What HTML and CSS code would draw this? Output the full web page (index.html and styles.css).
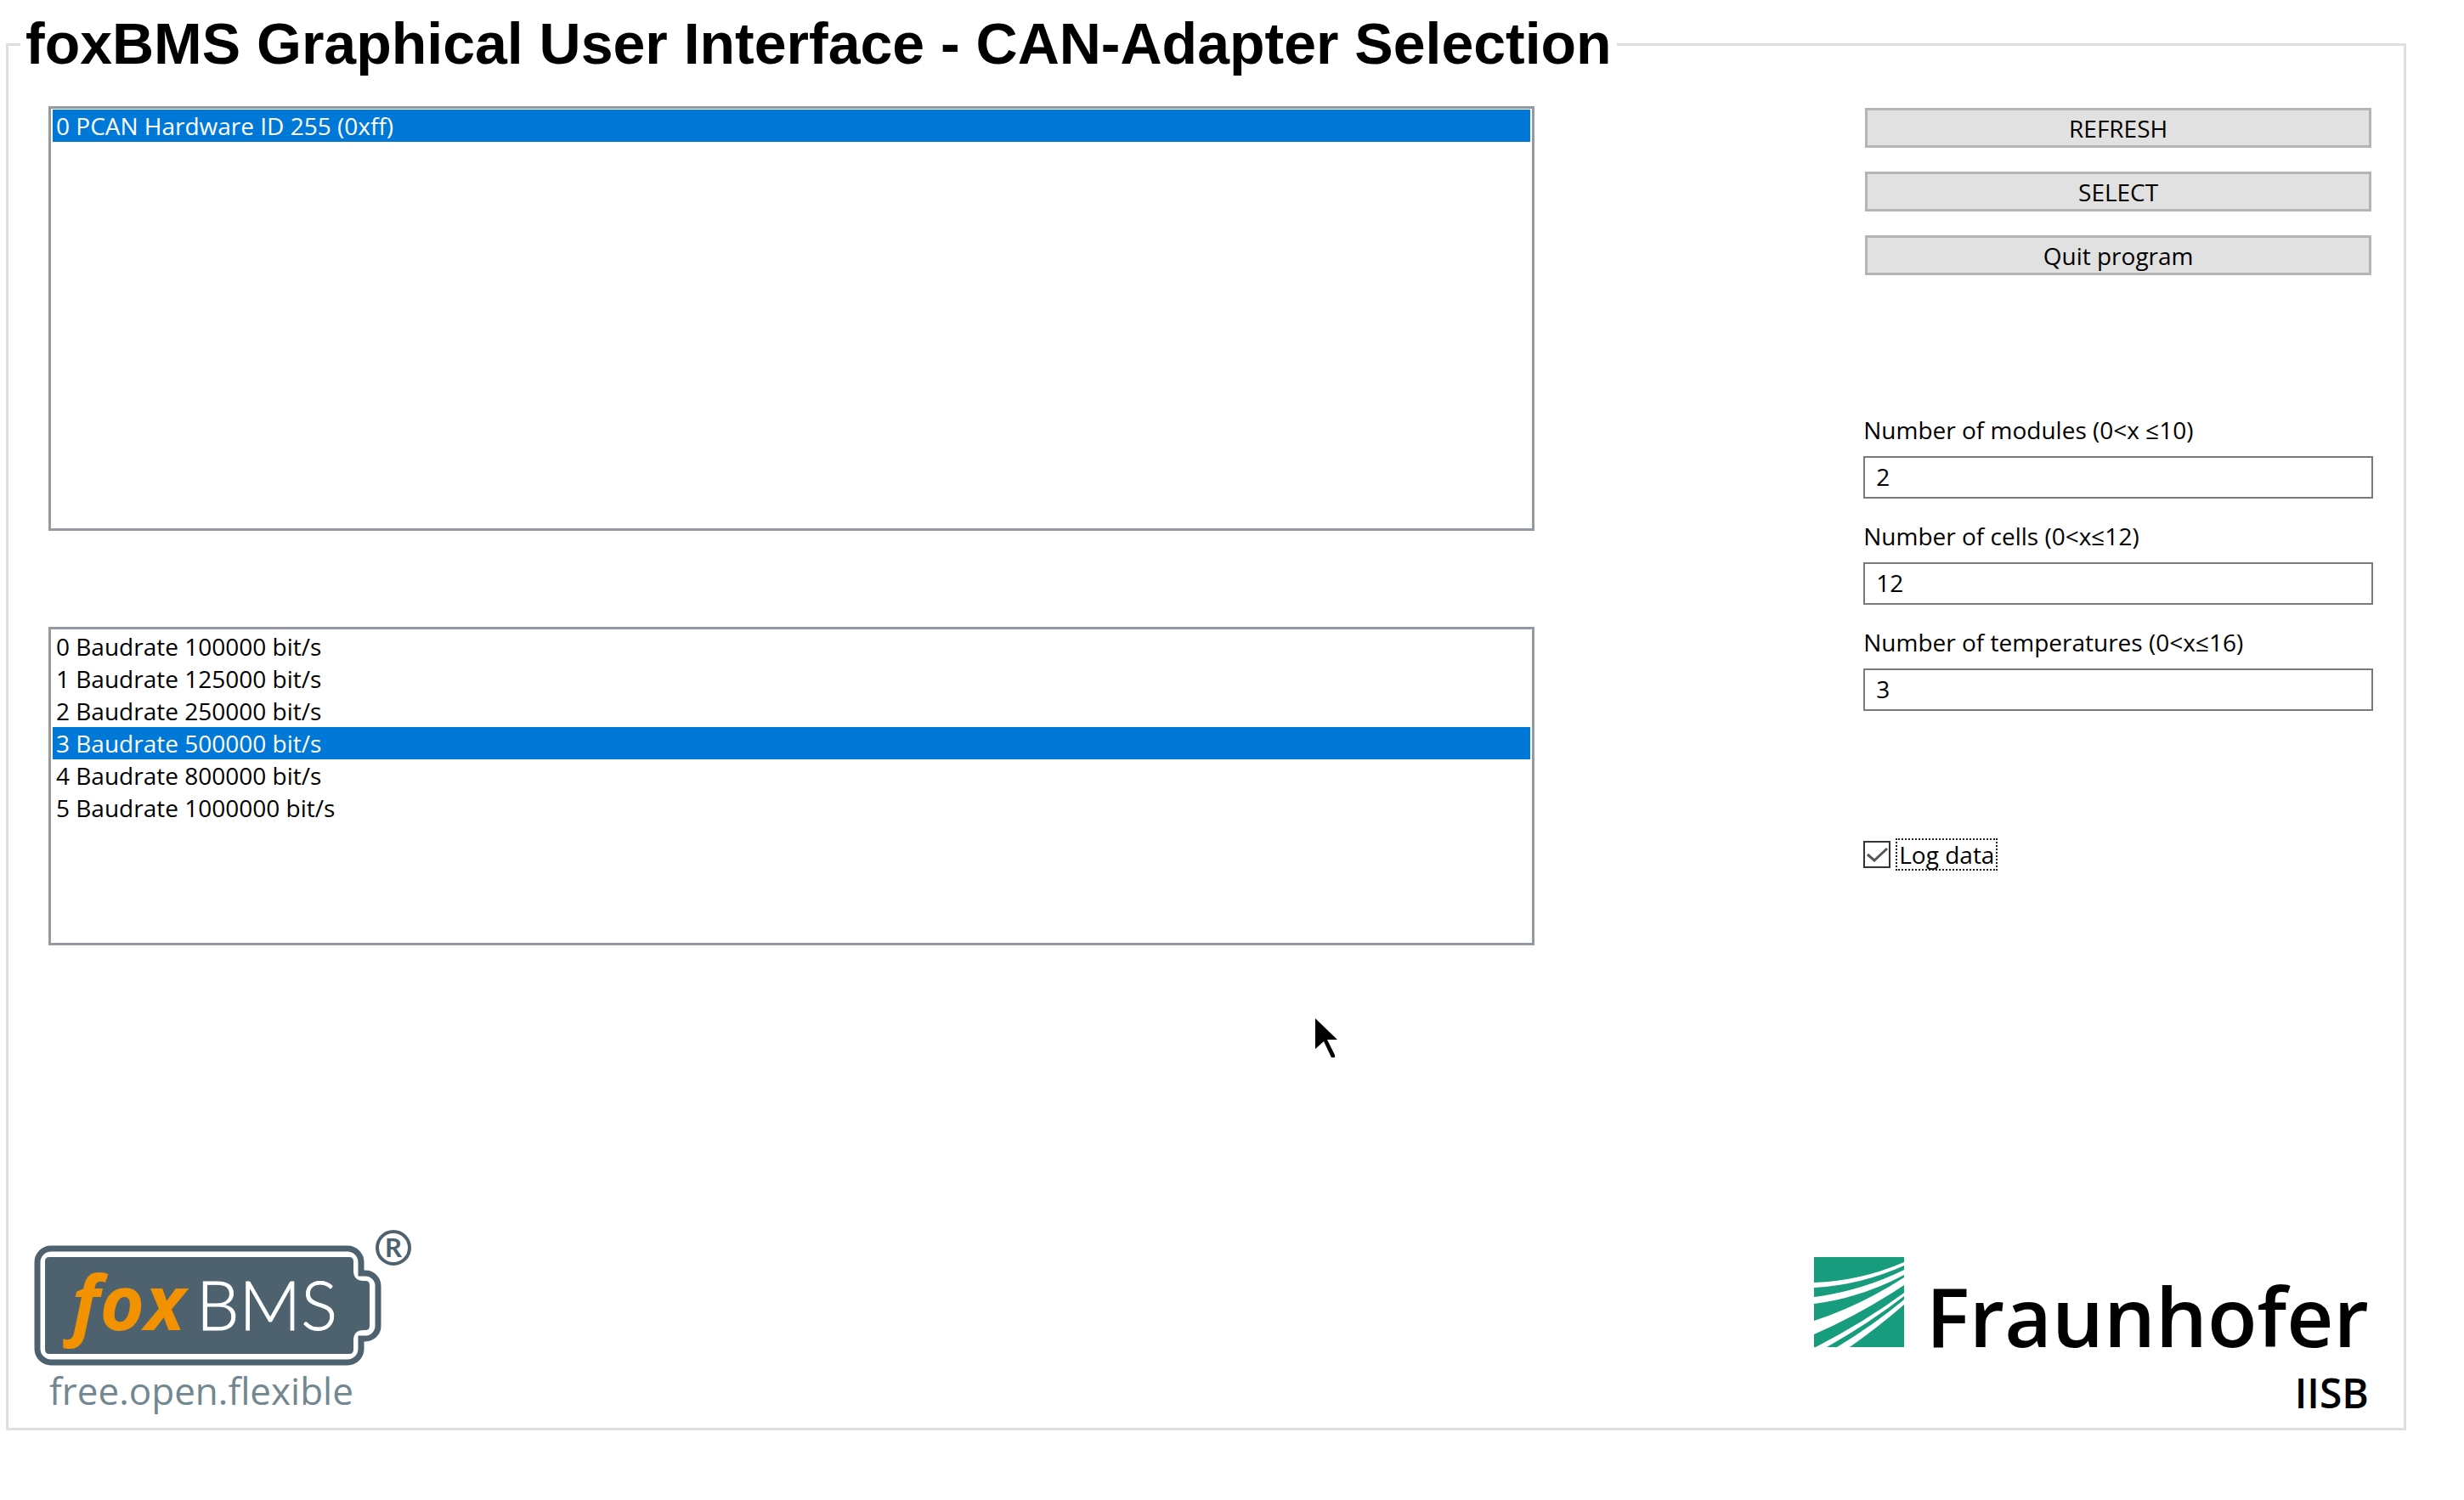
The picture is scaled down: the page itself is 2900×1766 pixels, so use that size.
FILE: index.html
```html
<!DOCTYPE html>
<html lang="en">
<head>
<meta charset="utf-8">
<title>foxBMS Graphical User Interface</title>
<link rel="stylesheet" href="styles.css">
</head>
<body>
<form class="window">
  <fieldset class="frame">
    <legend class="frame-title">foxBMS Graphical User Interface - CAN-Adapter Selection</legend>
    <div class="panels">
      <div class="lists">
        <select class="listbox listbox-adapters" size="13" aria-label="CAN adapter">
          <option selected>0 PCAN Hardware ID 255 (0xff)</option>
        </select>
        <select class="listbox listbox-baudrates" size="9" aria-label="Baudrate">
          <option>0 Baudrate 100000 bit/s</option>
          <option>1 Baudrate 125000 bit/s</option>
          <option>2 Baudrate 250000 bit/s</option>
          <option selected>3 Baudrate 500000 bit/s</option>
          <option>4 Baudrate 800000 bit/s</option>
          <option>5 Baudrate 1000000 bit/s</option>
        </select>
      </div>
      <div class="controls">
        <div class="actions">
          <button class="button" type="button">REFRESH</button>
          <button class="button" type="button">SELECT</button>
          <button class="button" type="button">Quit program</button>
        </div>
        <div class="fields">
          <label class="field-label" for="modules">Number of modules (0&lt;x ≤10)</label>
          <input class="field-input" id="modules" type="text" value="2">
          <label class="field-label" for="cells">Number of cells (0&lt;x≤12)</label>
          <input class="field-input" id="cells" type="text" value="12">
          <label class="field-label" for="temperatures">Number of temperatures (0&lt;x≤16)</label>
          <input class="field-input" id="temperatures" type="text" value="3">
        </div>
        <div class="log">
          <input class="log-box" id="log" type="checkbox" checked>
          <label class="log-label" for="log">Log data</label>
        </div>
      </div>
    </div>
    <div class="logos">
      <svg class="logo-foxbms" viewBox="20 25 450 225" role="img" aria-label="foxBMS">
        <path class="fox-outline" d="M40 50H389A16 16 0 0 1 405 66V79H410A15 15 0 0 1 425 94V141A15 15 0 0 1 410 156H405V168A16 16 0 0 1 389 184H40A16 16 0 0 1 24 168V66A16 16 0 0 1 40 50Z"/>
        <path class="fox-body" d="M38 60H391Q396 60 396 65V76Q396 88 408 88H410Q415 88 415 93V141Q415 146 410 146H408Q396 146 396 158V169Q396 174 391 174H38Q33 174 33 169V65Q33 60 38 60Z"/>
        <circle class="fox-ring" cx="443" cy="49" r="19"/>
        <text class="fox-mark" x="443" y="60" text-anchor="middle">R</text>
        <text class="fox-name" x="64" y="146">fox</text>
        <text class="fox-bms" x="211" y="146">BMS</text>
        <text class="fox-tagline" x="38" y="234">free.open.flexible</text>
      </svg>
      <svg class="logo-fraunhofer" viewBox="0 0 658 190" role="img" aria-label="Fraunhofer IISB">
        <path class="fh-green" d="M0 0H106V106H0Z"/>
        <path class="fh-ray" d="M0 30Q55 28 106 6V10Q55 33 0 36ZM0 47Q55 40 106 15V21Q55 48 0 55ZM0 75Q55 57 106 24V33Q55 67 0 91ZM2 106Q60 76 106 42V46Q66 77 15 106ZM27 106Q70 80 106 50V56Q76 82 42 106Z"/>
        <text class="fh-name" x="653" y="106" text-anchor="end">Fraunhofer</text>
        <text class="fh-unit" x="653" y="178" text-anchor="end">IISB</text>
      </svg>
    </div>
  </fieldset>
</form>
<svg class="pointer" viewBox="0 0 26 46" aria-hidden="true"><path d="M0 0L26 25H14L23 43V46H19L10 27L0 36Z"/></svg>
</body>
</html>
```
FILE: styles.css
```css
* {
  box-sizing: border-box;
}

body {
  margin: 0;
  background: #fff;
  color: #000;
  font: 28px/38px "Open Sans", "Noto Sans", sans-serif;
}

.window {
  padding: 12px 68px 80px 7px;
}

.frame {
  margin: 0;
  padding: 33px 36px 12px 31px;
  border: 3px solid #dfdfdf;
}

.frame-title {
  margin-left: -17px;
  padding: 0 6px 2px;
  font: bold 68px/78px "Liberation Sans", Arial, sans-serif;
}

.panels {
  display: grid;
  grid-template-columns: 35fr 12fr;
  column-gap: 387px;
  margin-left: 16px;
}

.lists {
  display: flex;
  flex-direction: column;
  gap: 113px;
}

.listbox {
  width: 100%;
  padding: 1px 2px;
  border: 3px solid #9599a1;
  border-radius: 0;
  background: #fff;
  font: inherit;
  color: inherit;
  overflow: hidden;
  outline: none;
}

.listbox-adapters {
  height: 500px;
}

.listbox-baudrates {
  height: 375px;
}

.listbox option {
  min-height: 38px;
  padding: 0 4px;
  line-height: 38px;
}

.listbox option:checked {
  background-image: linear-gradient(#0078d7, #0078d7);
  -webkit-text-fill-color: #fff;
}

.controls {
  display: flex;
  flex-direction: column;
}

.actions {
  display: flex;
  flex-direction: column;
  gap: 28px;
  padding: 2px;
}

.button {
  height: 47px;
  padding: 0;
  border: 3px solid #b4b4b4;
  border-radius: 0;
  background: #e1e1e1;
  color: inherit;
  font: inherit;
  line-height: 40px;
}

.fields {
  display: flex;
  flex-direction: column;
  margin-top: 149px;
}

.field-label {
  padding: 12px 0;
}

.field-input {
  height: 50px;
  margin-bottom: 13px;
  padding: 0 13px 2px;
  border: 2px solid #7a7a7a;
  border-radius: 0;
  background: #fff;
  color: inherit;
  font: inherit;
}

.log {
  display: flex;
  align-items: center;
  gap: 6px;
  margin-top: 137px;
}

.log-box {
  appearance: none;
  width: 32px;
  height: 32px;
  margin: 0;
  border: 2px solid #333;
  background: #fff url("data:image/svg+xml,%3Csvg xmlns='http://www.w3.org/2000/svg' viewBox='0 0 28 28'%3E%3Cpath d='M3 14l8 7L26 7' fill='none' stroke='%23555' stroke-width='3'/%3E%3C/svg%3E") center / 28px 28px no-repeat;
}

.log-label {
  padding: 0 2px;
  border: 2px dotted #222;
  line-height: 34px;
}

.logos {
  display: flex;
  align-items: flex-start;
  justify-content: space-between;
  margin-top: 332px;
}

.logo-foxbms {
  width: 450px;
  height: 225px;
  margin-left: -1px;
}

.logo-fraunhofer {
  width: 658px;
  height: 190px;
  margin-top: 35px;
}

.frame .logos {
  margin-bottom: -1px;
}

.fox-outline {
  fill: #fff;
  stroke: #4d626e;
  stroke-width: 7px;
}

.fox-body {
  fill: #4d626e;
}

.fox-ring {
  fill: none;
  stroke: #4d626e;
  stroke-width: 4px;
}

.fox-mark {
  fill: #4d626e;
  font: bold 31px Lato, sans-serif;
}

.fox-name {
  fill: #f39200;
  font: italic bold 90px "Open Sans", sans-serif;
}

.fox-bms {
  fill: #fff;
  font: 300 80px Lato, sans-serif;
  stroke: #fff;
  stroke-width: 1px;
}

.fox-tagline {
  fill: #728790;
  font: 400 44px "Open Sans", sans-serif;
}

.fh-green {
  fill: #179c7d;
}

.fh-ray {
  fill: #fff;
}

.fh-name {
  font: 600 96px "Open Sans", sans-serif;
}

.fh-unit {
  font: 600 48px "Open Sans", sans-serif;
}

.pointer {
  position: absolute;
  left: 1548px;
  top: 1199px;
  width: 26px;
  height: 46px;
}
```
